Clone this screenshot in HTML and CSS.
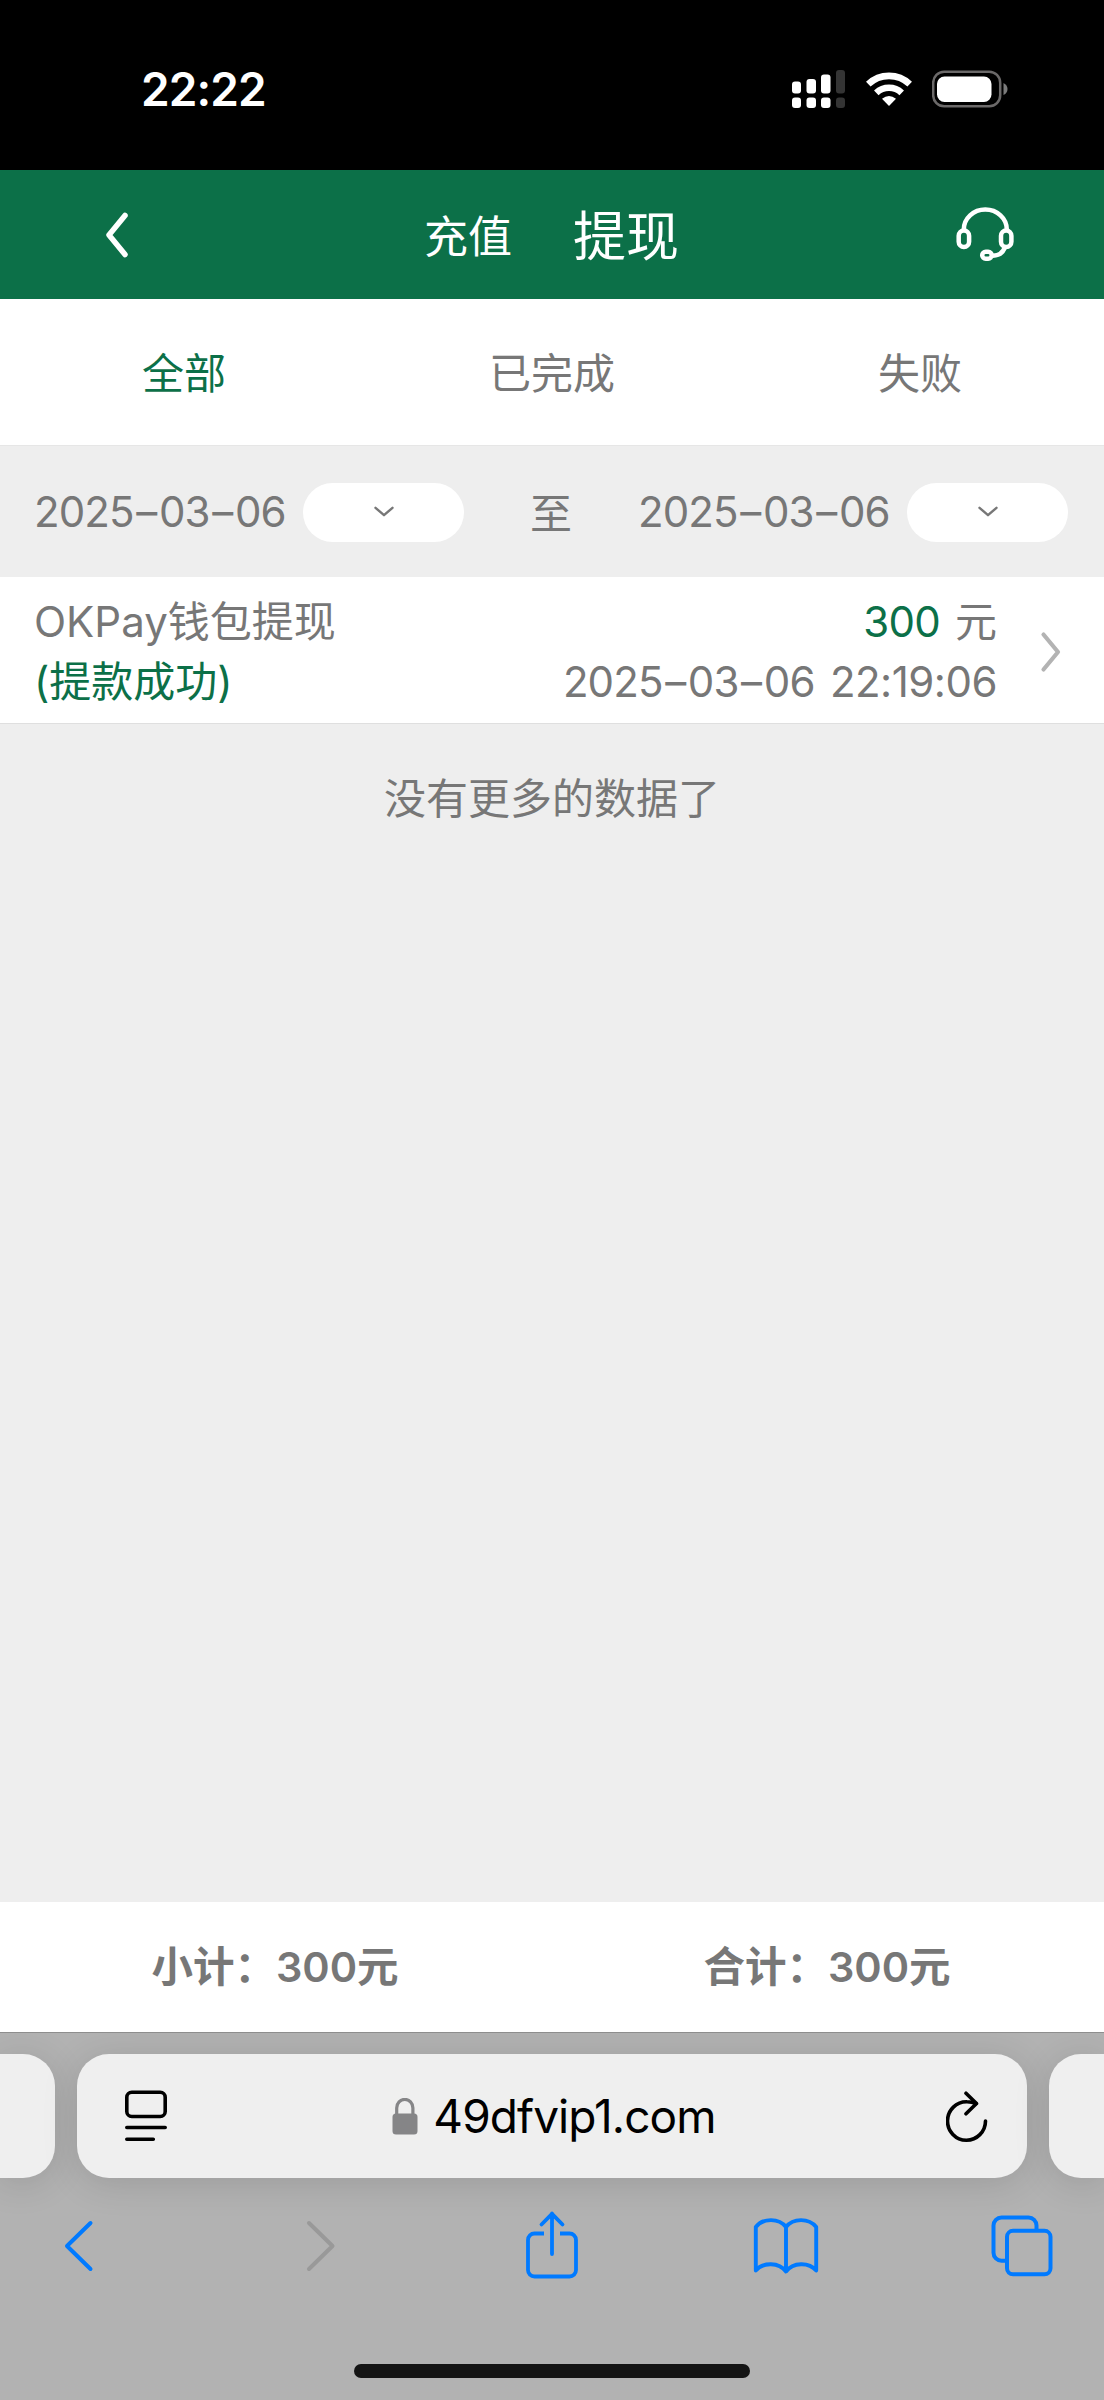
FILE: index.html
```html
<!DOCTYPE html>
<html lang="zh-CN">
<head>
<meta charset="utf-8">
<title>提现</title>
<link rel="stylesheet" href="styles.css">
</head>
<body>
<div class="phone">
  <div class="status">
    <span class="time">22:22</span>
    <div class="status-icons">
      <svg width="54" height="38" viewBox="0 0 54 38">
        <g fill="#fff">
          <rect x="0" y="11.5" width="9" height="12" rx="3"/><rect x="14.5" y="9" width="9.5" height="14.500" rx="3"/><rect x="29" y="4.500" width="9.500" height="19" rx="3"/>
          <rect x="0" y="27.500" width="9" height="10.500" rx="3"/><rect x="14.500" y="27.500" width="9.500" height="10.500" rx="3"/><rect x="29" y="27.500" width="9.500" height="10.500" rx="3"/>
        </g>
        <g fill="#343434"><rect x="44" y="0" width="9" height="23.500" rx="3"/><rect x="44" y="27.500" width="9" height="10.500" rx="3"/></g>
      </svg>
      <svg class="wifi" width="46" height="34" viewBox="0 0 46 34">
        <g fill="none" stroke="#fff" stroke-width="6.600">
          <path d="M2.300 12.200a30 30 0 0 1 41.400 0"/>
          <path d="M10.300 20.800a18.500 18.500 0 0 1 25.400 0"/>
        </g>
        <path d="M23 34l-7-7.300q7-5.200 14 0z" fill="#fff"/>
      </svg>
      <svg width="76" height="38" viewBox="0 0 76 38">
        <rect x="1.200" y="1.700" width="67" height="34.600" rx="11" fill="none" stroke="#6b6969" stroke-width="2.500"/>
        <rect x="5" y="6.500" width="54.500" height="25.500" rx="7.500" fill="#fff"/>
        <path d="M71.500 13q4 2 4 6t-4 6z" fill="#7b7b7b"/>
      </svg>
    </div>
  </div>

  <header class="header">
    <svg width="24" height="46" viewBox="0 0 24 46"><path d="M20 3.500L4 23l16 19.500" fill="none" stroke="#fff" stroke-width="5.500" stroke-linecap="round" stroke-linejoin="round"/></svg>
    <div class="titles"><span class="title-sub">充值</span><span class="title-main">提现</span></div>
    <svg width="58" height="56" viewBox="0 0 58 56">
      <g fill="none" stroke="#fff" stroke-width="4.500">
        <path d="M7.800 24v-1.500a21.500 20 0 0 1 43 0V24"/>
        <rect x="2.700" y="23.500" width="10.400" height="16.500" rx="5.200"/>
        <rect x="45" y="23.500" width="10.400" height="16.500" rx="5.200"/>
        <path d="M49 40c-2 6-5.500 8.500-12 8.700"/>
        <rect x="26.200" y="44.700" width="9.500" height="7" rx="3.500"/>
      </g>
    </svg>
  </header>

  <nav class="tabs"><span class="active">全部</span><span>已完成</span><span>失败</span></nav>

  <div class="filter">
    <span class="date">2025<i>–</i>03<i>–</i>06</span>
    <span class="pill"><svg width="20" height="12" viewBox="0 0 20 12"><path d="M1.500 1.800L10 9.200l8.500-7.400" fill="none" stroke="#777" stroke-width="2.400" stroke-linecap="round" stroke-linejoin="round"/></svg></span>
    <span class="to">至</span>
    <span class="date">2025<i>–</i>03<i>–</i>06</span>
    <span class="pill"><svg width="20" height="12" viewBox="0 0 20 12"><path d="M1.500 1.800L10 9.200l8.500-7.400" fill="none" stroke="#777" stroke-width="2.400" stroke-linecap="round" stroke-linejoin="round"/></svg></span>
  </div>

  <div class="record">
    <div class="record-name"><div>OKPay钱包提现</div><div class="ok">(提款成功)</div></div>
    <div class="record-value"><div class="amount"><span class="num">300</span><span>元</span></div><div class="stamp"><span class="date">2025<i>–</i>03<i>–</i>06</span><span class="clock">22:19:06</span></div></div>
    <svg width="22" height="42" viewBox="0 0 22 42"><path d="M3.500 3.500L18 21 3.500 38.500" fill="none" stroke="#b3b3b3" stroke-width="4.200" stroke-linecap="round" stroke-linejoin="round"/></svg>
  </div>

  <main class="empty">没有更多的数据了</main>

  <div class="totals"><div>小计：<span>300</span>元</div><div>合计：<span>300</span>元</div></div>

  <footer class="browser">
    <div class="cards">
      <div class="card side-left"></div>
      <div class="card address">
        <svg width="42" height="52" viewBox="0 0 42 52" fill="none" stroke="#000" stroke-width="3.600" stroke-linecap="round"><rect x="1.800" y="2.300" width="38.400" height="24.200" rx="5"/><path d="M1.800 37.500h38.400M1.800 49.300h26.500"/></svg>
        <div class="host">
          <svg width="26" height="37" viewBox="0 0 26 37"><path d="M4.700 17v-7a8.100 8.600 0 0 1 16.200 0v7" fill="none" stroke="#858587" stroke-width="3.200"/><rect x="0.500" y="15.500" width="25" height="21" rx="3.500" fill="#858587"/></svg>
          <span>49dfvip1.com</span>
        </div>
        <svg width="42" height="51" viewBox="0 0 42 51" fill="none" stroke="#000" stroke-width="3.600" stroke-linecap="round" stroke-linejoin="round"><path d="M30 12.600Q26 10.800 21 10.800A19 19.200 0 1 0 39.500 30"/><path d="M20 2.200l10.500 10.300L20 22.800"/></svg>
      </div>
      <div class="card side-right"></div>
    </div>
    <div class="toolbar">
      <svg width="30" height="52" viewBox="0 0 30 52"><path d="M26.500 3L3 26l23.500 23" fill="none" stroke="#007aff" stroke-width="4" stroke-linecap="round" stroke-linejoin="round"/></svg>
      <svg width="30" height="52" viewBox="0 0 30 52"><path d="M3 3l23.500 23L3 49" fill="none" stroke="#999" stroke-width="4" stroke-linecap="round" stroke-linejoin="round"/></svg>
      <svg class="share" width="54" height="68" viewBox="0 0 54 68" fill="none" stroke="#007aff" stroke-width="3.800"><path d="M19 22.500H9.500a6.500 6.500 0 0 0-6.500 6.500v30a6.500 6.500 0 0 0 6.500 6.500h35a6.500 6.500 0 0 0 6.500-6.500V29a6.500 6.500 0 0 0-6.500-6.500H35"/><path d="M27 43V2.500M16.500 13.500L27 2.800l10.500 10.700" stroke-linecap="round" stroke-linejoin="round"/></svg>
      <svg width="66" height="58" viewBox="0 0 66 58" fill="none" stroke="#007aff" stroke-width="3.900" stroke-linejoin="round"><path d="M33 10C26 .8 10 .8 2.800 10v43.500C10 45 26 45 33 54.500 40 45 56 45 63.200 53.500V10C56 .8 40 .8 33 10zM33 10v44.500"/></svg>
      <svg width="64" height="64" viewBox="0 0 64 64" fill="none" stroke="#007aff" stroke-width="4"><rect x="17" y="16.800" width="43.500" height="43.500" rx="6"/><path d="M17 46.800h-5.500a8 8 0 0 1-8-8V11.500a8 8 0 0 1 8-8h27a8 8 0 0 1 8 8v5.300"/></svg>
    </div>
    <div class="home"></div>
  </footer>
</div>
</body>
</html>
```
FILE: styles.css
```css
* { box-sizing: border-box; }
body { margin: 0; }
svg { display: block; flex: none; }
.phone {
  width: 1104px; height: 2400px; display: flex; flex-direction: column; overflow: hidden;
  background: #eee; color: #777;
  font-family: Inter, "Noto Sans CJK SC", sans-serif; font-size: 42px; white-space: nowrap;
}
.status { height: 170px; background: #000; color: #fff; padding: 60px 96px 0 141px; display: flex; justify-content: space-between; flex: none; }
.time { font-size: 46px; font-weight: 600; line-height: 59px; letter-spacing: -0.9px; }
.status-icons { display: flex; align-items: flex-start; padding-top: 10px; }
.wifi { margin: 2px 20px 0; }

.header { height: 129px; flex: none; background: #0c7048; color: #fff; display: grid; grid-template-columns: 105px 24px 1fr 58px 90px; align-items: center; }
.header > svg:first-child { grid-column: 2; }
.titles { display: flex; align-items: center; gap: 61px; padding: 4px 0 0 295px; line-height: 60px; }
.title-sub { font-size: 44px; }
.title-main { font-size: 53px; }

.tabs { height: 146px; flex: none; background: #fff; display: grid; grid-template-columns: repeat(3, 1fr); align-items: center; text-align: center; padding-bottom: 4px; }
.active, .ok, .num { color: #0c7048; }

.filter { height: 132px; flex: none; border-top: 1px solid #e6e6e6; display: flex; align-items: center; padding: 2px 0 0 34px; }
.date { width: 251px; letter-spacing: -0.9px; }
.date i { font-style: normal; margin: 0 2.6px; }
.filter .date { padding-bottom: 2px; }
.pill { width: 161px; height: 59px; border-radius: 30px; background: #fff; margin-left: 18px; display: flex; align-items: center; justify-content: center; padding-bottom: 2px; }
.to { width: 174px; text-align: center; padding-bottom: 5px; }

.record { height: 147px; flex: none; background: #fff; border-bottom: 1px solid #dfdfdf; display: flex; align-items: center; justify-content: space-between; padding: 3px 42px 0 34px; line-height: 60px; }
.record-value { margin-left: auto; margin-right: 43px; text-align: right; }
.amount { display: flex; justify-content: flex-end; gap: 15px; }
.stamp { display: flex; justify-content: flex-end; gap: 16px; }
.num { letter-spacing: -0.7px; }
.clock { letter-spacing: -0.5px; }

.empty { flex: 1; padding-top: 45px; text-align: center; line-height: 60px; }

.totals { height: 130px; flex: none; background: #fff; display: grid; grid-template-columns: 1fr 1fr; align-items: center; text-align: center; font-weight: 600; font-size: 41.5px; padding-bottom: 7px; }
.totals div { padding-right: 2px; }

.browser { height: 368px; flex: none; border-top: 1px solid #8e8e8e; background: #b2b2b2; padding-top: 21px; overflow: hidden; }
.cards { display: grid; grid-template-columns: 55px 950px 55px; gap: 22px; height: 124px; }
.card { background: #efefef; border-radius: 32px; box-shadow: 0 5px 36px rgba(0,0,0,.13); }
.side-left { border-radius: 0 32px 32px 0; }
.side-right { border-radius: 32px 0 0 32px; }
.address { display: flex; align-items: center; justify-content: space-between; padding: 0 39px 0 48px; color: #000; }
.host { display: flex; align-items: center; gap: 15px; font-size: 46px; letter-spacing: -0.9px; padding-right: 5px; }
.toolbar { display: grid; grid-template-columns: 242px 219px 228px 237px 64px; align-items: center; height: 68px; padding-left: 64px; margin-top: 34px; }
.share { margin-top: -2px; }
.home { width: 396px; height: 14px; border-radius: 7px; background: #141414; margin: 84px auto 0; }
```
